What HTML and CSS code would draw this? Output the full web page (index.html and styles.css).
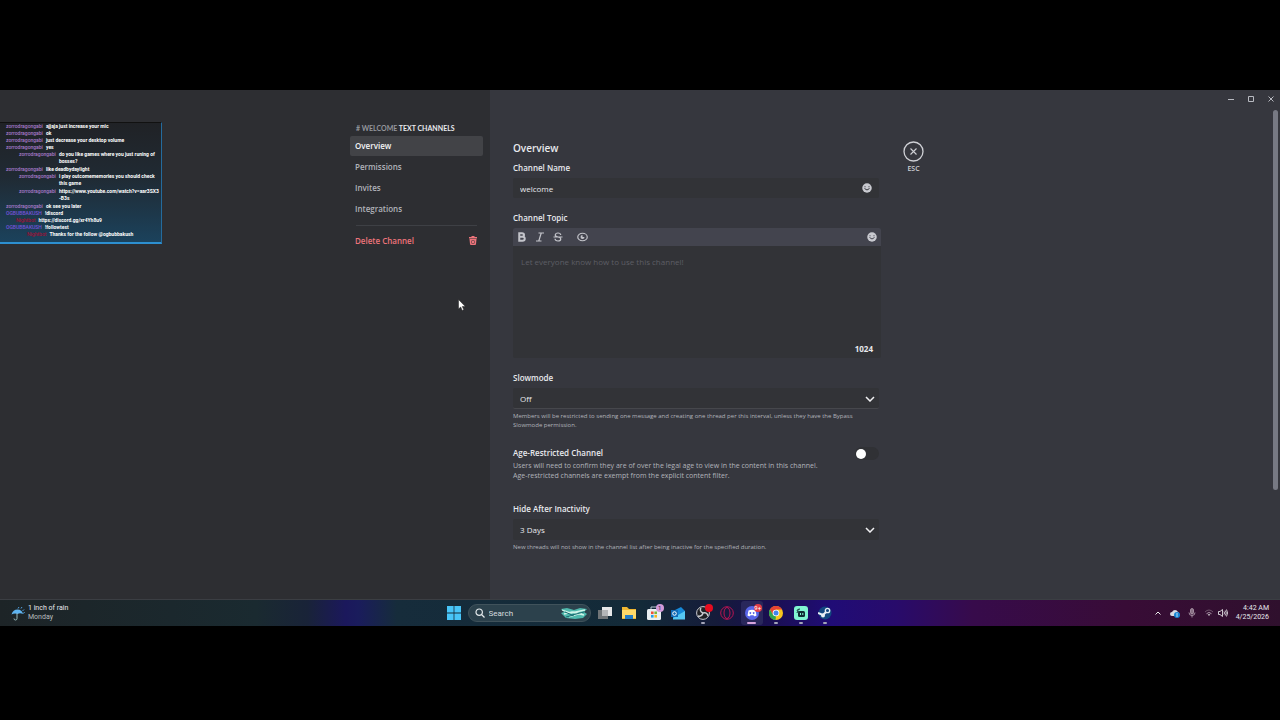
FILE: index.html
```html
<!DOCTYPE html>
<html lang="en">
<head>
    <meta charset="UTF-8">
    <meta name="viewport" content="width=device-width, initial-scale=1.0">
    <title>Channel Settings</title>
    <link rel="stylesheet" href="styles.css">
</head>
<body>
    <div class="screen">
        <div class="app">
            <!-- Sidebar -->
            <aside class="sidebar">
                <nav class="nav">
                    <h2 class="nav-title"><span class="nav-channel"># welcome</span> Text Channels</h2>
                    <a class="nav-item active" href="#">Overview</a>
                    <a class="nav-item" href="#">Permissions</a>
                    <a class="nav-item" href="#">Invites</a>
                    <a class="nav-item" href="#">Integrations</a>
                    <div class="nav-divider"></div>
                    <button class="nav-item nav-delete" type="button">
                        Delete Channel
                        <svg width="8" height="9" viewBox="0 0 16 18" fill="currentColor"><path d="M5 0h6v2h5v3H0V2h5z"/><path fill-rule="evenodd" d="M1 6h14l-1 10q0 2-2 2H4q-2 0-2-2zm4 3v6h6V9z"/><path d="M6 10h4v4H6z"/></svg>
                    </button>
                </nav>
            </aside>

            <!-- Settings -->
            <main class="content">
                <div class="window-bar">
                    <button class="window-btn" type="button" aria-label="Minimize"><svg width="8" height="8" viewBox="0 0 8 8"><path d="M1 4.500h6"/></svg></button>
                    <button class="window-btn" type="button" aria-label="Maximize"><svg width="8" height="8" viewBox="0 0 8 8"><path d="M1.500 1.500h5v5h-5z"/></svg></button>
                    <button class="window-btn" type="button" aria-label="Close"><svg width="8" height="8" viewBox="0 0 8 8"><path d="M1.500 1.500l5 5m0-5l-5 5"/></svg></button>
                </div>
                <div class="content-body">
                    <form class="settings">
                        <h1 class="page-title">Overview</h1>

                        <div class="form-group">
                            <label class="form-label" for="channel-name">Channel Name</label>
                            <div class="input-wrap">
                                <input class="form-input" type="text" id="channel-name" value="welcome">
                                <button class="emoji-btn" type="button" aria-label="Emoji"><svg width="10" height="10" viewBox="0 0 20 20"><circle cx="10" cy="10" r="9.500" fill="#c9cad0"/><path d="M5 7.500h2m6 0h2M5 11q5 6 10 0" fill="none" stroke="#34353a" stroke-width="2"/></svg></button>
                            </div>
                        </div>

                        <div class="form-group">
                            <label class="form-label" for="channel-topic">Channel Topic</label>
                            <div class="editor">
                                <div class="toolbar">
                                    <button class="tool-btn" type="button" aria-label="Bold"><svg width="10" height="10" viewBox="0 0 20 20"><path d="M4.500 2.500H10q4 0 4 3.500T10 9.500H4.500zM4.500 9.500H11q4.500 0 4.500 4t-4.500 4H4.500z" fill="none" stroke="currentColor" stroke-width="4"/></svg></button>
                                    <button class="tool-btn" type="button" aria-label="Italic"><svg width="10" height="10" viewBox="0 0 20 20"><path d="M7 2h11M2 18h11M12.500 2l-5 16" fill="none" stroke="currentColor" stroke-width="2.400"/></svg></button>
                                    <button class="tool-btn" type="button" aria-label="Strikethrough"><svg width="10" height="10" viewBox="0 0 20 20"><path d="M15.500 6Q15 2 10 2T4.500 6q0 3 5.500 4t5.500 4q0 4-5.500 4t-6-4.500M1 10h18" fill="none" stroke="currentColor" stroke-width="2.400"/></svg></button>
                                    <button class="tool-btn tool-spoiler" type="button" aria-label="Spoiler"><svg width="11" height="10" viewBox="0 0 22 20"><ellipse cx="11" cy="10" rx="9.500" ry="7.500" fill="none" stroke="currentColor" stroke-width="2.400"/><path d="M11 6a4 4 0 1 0 4 4h-4z" fill="currentColor"/></svg></button>
                                    <button class="tool-btn tool-emoji" type="button" aria-label="Emoji"><svg width="10" height="10" viewBox="0 0 20 20"><circle cx="10" cy="10" r="9.500" fill="#c9cad0"/><path d="M5 7.500h2m6 0h2M5 11q5 6 10 0" fill="none" stroke="#43444e" stroke-width="2"/></svg></button>
                                </div>
                                <textarea class="topic-input" id="channel-topic" placeholder="Let everyone know how to use this channel!"></textarea>
                                <span class="char-count">1024</span>
                            </div>
                        </div>

                        <div class="form-group">
                            <label class="form-label" for="slowmode">Slowmode</label>
                            <div class="select-wrap">
                                <select class="form-select underlined" id="slowmode"><option>Off</option></select>
                                <svg class="select-arrow" width="10" height="6" viewBox="0 0 10 6"><path d="M1 1l4 4 4-4"/></svg>
                            </div>
                            <p class="hint">Members will be restricted to sending one message and creating one thread per this interval, unless they have the Bypass Slowmode permission.</p>
                        </div>

                        <div class="form-group toggle-group">
                            <label class="form-label" for="age-restricted">Age-Restricted Channel</label>
                            <input class="toggle" type="checkbox" id="age-restricted">
                            <p class="description">Users will need to confirm they are of over the legal age to view in the content in this channel.<br>Age-restricted channels are exempt from the explicit content filter.</p>
                        </div>

                        <div class="form-group">
                            <label class="form-label" for="hide-after">Hide After Inactivity</label>
                            <div class="select-wrap">
                                <select class="form-select" id="hide-after"><option>3 Days</option></select>
                                <svg class="select-arrow" width="10" height="6" viewBox="0 0 10 6"><path d="M1 1l4 4 4-4"/></svg>
                            </div>
                            <p class="hint">New threads will not show in the channel list after being inactive for the specified duration.</p>
                        </div>
                    </form>
                    <button class="esc-btn" type="button">
                        <svg width="21" height="21" viewBox="0 0 21 21" fill="none" stroke="currentColor"><circle cx="10.500" cy="10.500" r="9.500" stroke-width="1.300"/><path d="M7.500 7.500l6 6m0-6l-6 6" stroke-width="1.100"/></svg>
                        ESC
                    </button>
                    <div class="scrollbar"></div>
                </div>
            </main>

            <!-- Stream chat overlay -->
            <section class="chat">
                <p class="chat-row"><b class="chat-user">zorrodragongabi</b><span>ajjaja just increase your mic</span></p>
                <p class="chat-row"><b class="chat-user">zorrodragongabi</b><span>ok</span></p>
                <p class="chat-row"><b class="chat-user">zorrodragongabi</b><span>just decrease your desktop volume</span></p>
                <p class="chat-row"><b class="chat-user">zorrodragongabi</b><span>yes</span></p>
                <p class="chat-row wrapped"><b class="chat-user">zorrodragongabi</b><span>do you like games where you just runing of bosses?</span></p>
                <p class="chat-row"><b class="chat-user">zorrodragongabi</b><span>like deadbydaylight</span></p>
                <p class="chat-row wrapped"><b class="chat-user">zorrodragongabi</b><span>i play outcomememories you should check this game</span></p>
                <p class="chat-row wrapped"><b class="chat-user">zorrodragongabi</b><span class="chat-link">https://www.youtube.com/watch?v=aar3SX3-B3s</span></p>
                <p class="chat-row"><b class="chat-user">zorrodragongabi</b><span>ok see you later</span></p>
                <p class="chat-row"><b class="chat-user owner">OGBUBBAKUSH</b><span>!discord</span></p>
                <p class="chat-row reply"><b class="chat-user bot">Nightbot</b><span>https://discord.gg/xr4Yh8u9</span></p>
                <p class="chat-row"><b class="chat-user owner">OGBUBBAKUSH</b><span>!followtest</span></p>
                <p class="chat-row reply-far"><b class="chat-user bot">Nightbot</b><span>Thanks for the follow @ogbubbakush</span></p>
            </section>

            <svg class="cursor" width="8" height="12" viewBox="0 0 8 12"><path d="M.5.5v9.500l2.200-2 1.500 3.500 1.600-.7-1.500-3.300h3z" fill="#fff" stroke="#222" stroke-width=".5"/></svg>
        </div>

        <!-- Taskbar -->
        <footer class="taskbar">
            <div class="weather">
                <svg width="14" height="15" viewBox="0 0 28 30"><path d="M1 17Q4 7 13 7t11 9q-6-3-11 0-6-2-12 1z" fill="#5fb4f0"/><path d="M12 15v10q0 3-3 3t-3-3" fill="none" stroke="#9bb" stroke-width="2"/><path d="M14 5l2-3m4 3l2-3m1 8l3-3m-1 8l2-3" stroke="#52a2e2" stroke-width="2"/></svg>
                <p>1 inch of rain<br><span>Monday</span></p>
            </div>
            <div class="dock">
                <button class="dock-btn" type="button" aria-label="Start"><svg width="14" height="14" viewBox="0 0 14 14"><path d="M0 0h6.600v6.600H0zm7.400 0H14v6.600H7.400zM0 7.400h6.600V14H0zm7.400 0H14V14H7.400z" fill="#48c5f8"/></svg></button>
                <div class="search">
                    <svg width="10" height="10" viewBox="0 0 10 10" fill="none" stroke="#e4eaec" stroke-width="1.200"><circle cx="4.200" cy="4.200" r="3.200"/><path d="M6.500 6.500L9.500 9.500"/></svg>
                    <input class="search-input" type="text" placeholder="Search" aria-label="Search">
                    <svg width="28" height="14" viewBox="0 0 28 14"><path d="M1 3l6-1 7 2 6-2 7 1-3 3 3 2-4 4-8 1-9-1-5-5 3-1z" fill="#4fb9ad"/><path d="M2 4l9 3L25 4M4 8l8-2 12 3M9 11l13-4" fill="none" stroke="#d1f4e9" stroke-width="1.300"/><path d="M5 6l7 3 12-3M6 11l8-2" fill="none" stroke="#176b70"/></svg>
                </div>
                <div class="dock-apps">
                    <button class="dock-btn" type="button" aria-label="Task view"><svg width="14" height="14" viewBox="0 0 14 14"><path d="M0 4h10v9H0z" fill="#6f7477"/><path d="M4 1h10v9H4z" fill="#e6e7e8"/><path d="M4 4h6v6H4z" fill="#b4b6b8"/></svg></button>
                    <button class="dock-btn" type="button" aria-label="File Explorer"><svg width="14" height="14" viewBox="0 0 14 14"><path d="M0 1h5l2 2h7v10H0z" fill="#efb832"/><path d="M0 4h14v8H0z" fill="#ffda69"/><path d="M3 13V9h8v4z" fill="#247dc5"/></svg></button>
                    <button class="dock-btn" type="button" aria-label="Store"><svg width="14" height="14" viewBox="0 0 14 14"><path d="M4 4V1h6v3" fill="none" stroke="#bac8d1"/><rect y="3" width="14" height="11" rx="1.500" fill="#e9eff2"/><path d="M4 5.500h2.600v2.600H4z" fill="#ef5035"/><path d="M7.400 5.500H10v2.600H7.400z" fill="#79b63a"/><path d="M4 9h2.600v2.600H4z" fill="#249fe5"/><path d="M7.400 9H10v2.600H7.400z" fill="#f8b51c"/></svg><span class="badge badge-store">1</span></button>
                    <button class="dock-btn" type="button" aria-label="Outlook"><svg width="14" height="13" viewBox="0 0 14 13"><path d="M2 4l8-4 4 4v8H2z" fill="#1689d8"/><path d="M2 11l12-7v8.500H2z" fill="#55c8f4"/><path d="M0 3h7v7H0z" fill="#126bb5"/><circle cx="3.500" cy="6.500" r="1.800" fill="none" stroke="#fff"/></svg></button>
                    <button class="dock-btn running" type="button" aria-label="OBS"><svg width="14" height="14" viewBox="0 0 14 14"><circle cx="7" cy="7" r="6.400" fill="#202125" stroke="#c9cbd0"/><path d="M7 7Q3 5 5 2m2 5q4-1 5 3M7 7q-1 4-5 3" fill="none" stroke="#c9cbd0" stroke-width="1.400"/></svg><span class="badge badge-rec"></span></button>
                    <button class="dock-btn" type="button" aria-label="Opera GX"><svg width="14" height="14" viewBox="0 0 14 14" fill="none" stroke="#b91453"><circle cx="7" cy="7" r="6.300"/><ellipse cx="7" cy="7" rx="3" ry="5.500"/></svg></button>
                    <button class="dock-btn running current" type="button" aria-label="Discord"><svg width="14" height="14" viewBox="0 0 14 14"><circle cx="7" cy="7" r="7" fill="#5865e8"/><path fill-rule="evenodd" d="M3.500 4.500Q7 3 10.500 4.500l1 5Q10 10.600 9 10l-.5-.7h-3L5 10q-1 .6-2.500-.5zM5.300 6a.9 1 0 1 0 .1 0zm3.300 0a.9 1 0 1 0 .1 0z" fill="#fff"/></svg><span class="badge badge-discord">9+</span></button>
                    <button class="dock-btn running" type="button" aria-label="Chrome"><svg width="14" height="14" viewBox="0 0 14 14"><circle cx="7" cy="7" r="7" fill="#f8c51d"/><path d="M.9 3.500a7 7 0 0 1 12.200 0H7L4 8.700z" fill="#e64234"/><path d="M.9 3.500L4 8.700 7 10.500 6.500 14A7 7 0 0 1 .9 3.500z" fill="#31a552"/><circle cx="7" cy="7" r="3.300" fill="#fff"/><circle cx="7" cy="7" r="2.500" fill="#4285ec"/></svg></button>
                    <button class="dock-btn running" type="button" aria-label="Streamlabs"><svg width="14" height="14" viewBox="0 0 14 14"><rect width="14" height="14" rx="3" fill="#80f5d2"/><path d="M3 5q0-2 3-2M3 7q0-2 2-2" fill="none" stroke="#102d34"/><rect x="4" y="5" width="7" height="6" rx="1.500" fill="#102d34"/><path d="M6.500 7v2M8.800 7v2" stroke="#80f5d2"/></svg></button>
                    <button class="dock-btn running" type="button" aria-label="Steam"><svg width="14" height="14" viewBox="0 0 14 14"><circle cx="7" cy="7" r="6.500" fill="#124780"/><path d="M0 7l5 2 4-4" fill="none" stroke="#e6eef5" stroke-width="2"/><circle cx="9.500" cy="4.500" r="2.200" fill="#124780" stroke="#e6eef5" stroke-width="1.300"/><circle cx="5" cy="9.500" r="2" fill="#e6eef5"/></svg></button>
                </div>
            </div>
            <div class="tray">
                <svg width="8" height="8" viewBox="0 0 8 8"><path d="M1.500 5.500L4 3l2.500 2.500" fill="none" stroke="#eee"/></svg>
                <svg width="10" height="9" viewBox="0 0 10 9"><path d="M2 7Q0 7 0 5t2-2q1-2 3-2t3 2q2 1 1 4z" fill="#d8d9e2"/><circle cx="7" cy="6" r="3" fill="#1683d3"/><path d="M7 4v4" stroke="#fff" stroke-width=".7"/></svg>
                <svg width="8" height="10" viewBox="0 0 8 10"><rect x="2.500" y=".5" width="3" height="5.500" rx="1.500" fill="#897185" stroke="#bba9b9" stroke-width=".7"/><path d="M1 4.500Q1 7.500 4 7.500t3-3M4 7.500v2" fill="none" stroke="#bba9b9" stroke-width=".8"/></svg>
                <div class="tray-group">
                    <svg width="10" height="8" viewBox="0 0 10 8" fill="none"><path d="M1 3q4-4 8 0" stroke="#6c5269"/><path d="M2.500 4.700q2.500-2.500 5 0" stroke="#a994a7"/><path d="M3.700 5.200h2.600L5 7z" fill="#ddd"/></svg>
                    <svg width="10" height="10" viewBox="0 0 10 10" fill="none" stroke="#dedbe0" stroke-width=".9"><path d="M.5 3.500h1.500l2.500-2v7L2 6.500H.5zM6 3.500q1 1.500 0 3M7.300 2.500q2 2.500 0 5M8.500 1.500q2.200 3.500 0 7"/></svg>
                </div>
                <p class="clock">4:42 AM<br>4/25/2026</p>
            </div>
        </footer>
    </div>
</body>
</html>
```

FILE: styles.css
```css
:root {
    --sidebar-background: #2d2e32;
    --content-background: #36373e;
    --field-background: #323337;
    --toolbar-background: #43444e;
    --selected-background: #424347;
    --text-color: #e8e9ed;
    --muted-color: #b1b3ba;
    --danger-color: #ed747b;
}

* {
    box-sizing: border-box;
}

body {
    margin: 0;
    min-height: 100vh;
    display: flex;
    flex-direction: column;
    justify-content: center;
    background: #000;
    color: var(--text-color);
    font-family: "Open Sans", "Noto Sans", sans-serif;
    font-size: 8px;
}

h1, h2, p {
    margin: 0;
}

a {
    color: inherit;
    text-decoration: none;
}

button, input, select, textarea {
    margin: 0;
    padding: 0;
    border: none;
    outline: none;
    background: none;
    color: inherit;
    font: inherit;
}

svg {
    display: block;
    flex: none;
}

.screen {
    padding-bottom: 4px;
}

.app {
    position: relative;
    display: grid;
    grid-template-columns: 49fr 79fr;
    min-height: 509px;
    background: var(--content-background);
}

/* Sidebar */
.sidebar {
    display: flex;
    justify-content: flex-end;
    padding: 32px 7px 0 0;
    background: var(--sidebar-background);
}

.nav {
    display: flex;
    flex-direction: column;
    gap: 1px;
    width: 133px;
}

.nav-title {
    padding-left: 6px;
    margin-bottom: 1px;
    font-family: Lato, "Noto Sans", sans-serif;
    font-size: 7px;
    line-height: 12px;
    font-weight: 700;
    text-transform: uppercase;
}

.nav-channel {
    color: #94969d;
}

.nav-item {
    display: flex;
    align-items: center;
    justify-content: space-between;
    height: 20px;
    padding: 0 6px 2px 5px;
    border-radius: 2px;
    color: var(--muted-color);
    font-weight: 600;
}

.nav-item.active {
    background: var(--selected-background);
    color: #f4f4f6;
}

.nav-divider {
    height: 1px;
    margin: 5px 6px 4px;
    background: #3e4045;
}

.nav-delete {
    color: var(--danger-color);
}

/* Settings */
.content {
    display: flex;
    flex-direction: column;
}

.window-bar {
    display: flex;
    justify-content: flex-end;
    gap: 12px;
    height: 20px;
    padding: 5px 5px 0 0;
}

.window-btn {
    width: 8px;
    height: 8px;
}

.window-btn svg {
    fill: none;
    stroke: #b8bac1;
}

.content-body {
    flex: 1;
    display: flex;
    align-items: flex-start;
    padding: 0 2px 0 23px;
}

.settings {
    flex: 0 1 366px;
    padding-top: 31px;
}

.page-title {
    font-size: 10px;
    line-height: 14px;
    font-weight: 600;
    margin-bottom: 7px;
}

.form-group {
    margin-bottom: 14px;
}

.form-label {
    display: block;
    height: 16px;
    line-height: 12px;
    font-weight: 600;
}

.input-wrap {
    display: flex;
    align-items: center;
    justify-content: space-between;
    height: 20px;
    padding: 0 7px;
    border-radius: 2px;
    background: var(--field-background);
}

.form-input {
    flex: 1;
}

.editor {
    display: flex;
    flex-direction: column;
    margin-right: -2px;
    border-radius: 2px;
    background: var(--field-background);
}

.toolbar {
    display: flex;
    align-items: center;
    gap: 8px;
    height: 18px;
    padding: 0 4px;
    border-radius: 2px 2px 0 0;
    background: var(--toolbar-background);
    color: #c3c4ca;
}

.tool-spoiler {
    margin-left: 6px;
}

.tool-emoji {
    margin-left: auto;
}

.topic-input {
    height: 97px;
    padding: 10px 8px;
    line-height: 12px;
    resize: none;
}

.topic-input::placeholder {
    color: #5d5e65;
    opacity: 1;
}

.char-count {
    align-self: flex-end;
    height: 15px;
    padding-right: 8px;
    line-height: 12px;
    font-weight: 700;
}

.select-wrap {
    position: relative;
}

.form-select {
    display: block;
    width: 100%;
    height: 21px;
    padding: 0 7px;
    border-radius: 2px;
    background: var(--field-background);
    appearance: none;
}

.form-select.underlined {
    border-bottom: 1px solid #46474c;
}

.select-arrow {
    position: absolute;
    right: 4px;
    top: 8px;
    fill: none;
    stroke: #f0f0f2;
    stroke-width: 1.5;
}

.hint {
    margin-top: 3px;
    color: var(--muted-color);
    font-size: 6px;
    line-height: 9px;
}

.toggle-group {
    display: grid;
    grid-template-columns: 1fr auto;
    padding-top: 3px;
    margin-bottom: 22px;
}

.toggle-group .form-label {
    height: 14px;
}

.toggle {
    width: 24px;
    height: 13px;
    padding: 2px 1px;
    border-radius: 7px;
    background: #303135;
    appearance: none;
}

.toggle::before {
    content: "";
    display: block;
    width: 10px;
    height: 10px;
    border-radius: 50%;
    background: #fff;
}

.description {
    grid-column: 1;
    color: var(--muted-color);
    font-size: 7px;
    line-height: 10px;
}

.esc-btn {
    display: flex;
    flex-direction: column;
    align-items: center;
    gap: 1px;
    margin: 31px 0 0 24px;
    color: #cfd0d5;
    font-size: 7px;
    line-height: 12px;
    font-weight: 600;
}

.scrollbar {
    width: 5px;
    height: 380px;
    margin-left: auto;
    border-radius: 3px;
    background: #777983;
}

/* Chat overlay */
.chat {
    position: absolute;
    left: 0;
    top: 32px;
    width: 162px;
    height: 122px;
    padding: 0 1px 0 6px;
    border: 1px solid #246b9d;
    border-top-color: #111;
    border-bottom: 2px solid #2d8fd0;
    border-left-width: 0;
    background: linear-gradient(#202226, #202a33 45%, #1b425c);
    color: #fff;
    font-family: Roboto, "Noto Sans", sans-serif;
    font-size: 5px;
    line-height: 7px;
    font-weight: 700;
    overflow: hidden;
}

.chat-row {
    display: flex;
    gap: 3px;
}

.chat-row.wrapped {
    margin: 0 0 1px 13px;
}

.chat-link {
    word-break: break-all;
}

.chat-row.reply {
    margin-left: 10px;
}

.chat-row.reply-far {
    margin-left: 21px;
}

.chat-user {
    flex: none;
    font-weight: 500;
    color: #a77bca;
}

.chat-user.owner {
    color: #7754dc;
}

.chat-user.bot {
    color: #a00f35;
}

.cursor {
    position: absolute;
    left: 458px;
    top: 209px;
}

/* Taskbar */
.taskbar {
    display: grid;
    grid-template-columns: 1fr auto 1fr;
    align-items: center;
    height: 27px;
    padding: 0 11px;
    border-top: 1px solid #3b3e43;
    background: linear-gradient(90deg, #1d2427, #1a2a30 20%, #192338 24%, #1b185c 27%, #1a1c5c 28%, #162c3b 31%, #132a38 50%, #151b3a 56%, #190f50 60%, #200c76 65%, #280b6b 70%, #370b4b 76%, #380c36 88%, #2f102d);
    font-family: Roboto, "Noto Sans", sans-serif;
    font-size: 7px;
    line-height: 9px;
}

.weather {
    display: flex;
    align-items: center;
    gap: 3px;
}

.weather span {
    color: #b7bcbe;
}

.dock {
    display: flex;
    align-items: center;
}

.dock-btn {
    position: relative;
    display: flex;
    align-items: center;
    justify-content: center;
    width: 22px;
    height: 24px;
}

.search {
    display: flex;
    align-items: center;
    gap: 4px;
    width: 123px;
    height: 18px;
    margin: 0 2px 0 3px;
    padding: 0 2px 0 6px;
    border: 1px solid #40525b;
    border-radius: 9px;
    background: #2c414c;
}

.search-input {
    flex: 1;
    min-width: 0;
    font-size: 8px;
}

.search-input::placeholder {
    color: #d6dcdf;
    opacity: 1;
}

.dock-apps {
    display: grid;
    grid-template-columns: repeat(10, 1fr);
    justify-items: center;
    width: 245px;
}

.dock-btn.running::after {
    content: "";
    position: absolute;
    bottom: 1px;
    width: 4px;
    height: 2px;
    border-radius: 1px;
    background: #a3a5b8;
}

.dock-btn.current {
    border-radius: 3px;
    background: #29275b;
}

.dock-btn.current::after {
    width: 9px;
    background: #d6a3dc;
}

.badge {
    position: absolute;
    right: 1px;
    top: 3px;
    min-width: 8px;
    height: 8px;
    border-radius: 4px;
    font-size: 6px;
    line-height: 8px;
    text-align: center;
}

.badge-store {
    background: #d29ad9;
    color: #331c43;
}

.badge-rec {
    background: #e60c20;
}

.badge-discord {
    background: #e23d48;
    color: #fff;
}

.tray {
    display: flex;
    align-items: center;
    justify-content: flex-end;
    gap: 8px;
}

.tray-group {
    display: flex;
    align-items: center;
    gap: 4px;
}

.clock {
    text-align: right;
}
```
